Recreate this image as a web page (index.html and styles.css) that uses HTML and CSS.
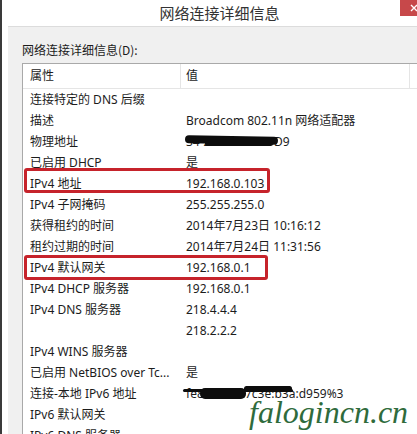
FILE: index.html
```html
<!DOCTYPE html>
<html lang="zh-CN">
<head>
<meta charset="utf-8">
<title>网络连接详细信息</title>
<link rel="stylesheet" href="styles.css">
</head>
<body>
<div class="window">
  <div class="titlebar">
    <span class="title">网络连接详细信息</span>
    <div class="close">
      <svg width="17" height="16" viewBox="0 0 17 16"><path d="M11 5 L17 11 M17 5 L11 11" stroke="#fff" stroke-width="1.4" fill="none"/></svg>
    </div>
  </div>
  <div class="client">
    <div class="label">网络连接详细信息(D):</div>
    <div class="listbox">
      <div class="header">
        <div class="hcell hc1">属性</div>
        <div class="hcell hc2">值</div>
        <div class="hcell hc3"></div>
      </div>
      <div class="rows">
        <div class="k">连接特定的 DNS 后缀</div><div class="v"></div>
        <div class="k">描述</div><div class="v">Broadcom 802.11n 网络适配器</div>
        <div class="k">物理地址</div><div class="v">34-23-87-56-57-D9</div>
        <div class="k">已启用 DHCP</div><div class="v">是</div>
        <div class="k">IPv4 地址</div><div class="v">192.168.0.103</div>
        <div class="k">IPv4 子网掩码</div><div class="v">255.255.255.0</div>
        <div class="k">获得租约的时间</div><div class="v">2014年7月23日 10:16:12</div>
        <div class="k">租约过期的时间</div><div class="v">2014年7月24日 11:31:56</div>
        <div class="k">IPv4 默认网关</div><div class="v">192.168.0.1</div>
        <div class="k">IPv4 DHCP 服务器</div><div class="v">192.168.0.1</div>
        <div class="k">IPv4 DNS 服务器</div><div class="v">218.4.4.4</div>
        <div class="k"></div><div class="v">218.2.2.2</div>
        <div class="k">IPv4 WINS 服务器</div><div class="v"></div>
        <div class="k">已启用 NetBIOS over Tc...</div><div class="v">是</div>
        <div class="k">连接-本地 IPv6 地址</div><div class="v">fe80::40f5:7c3e:b3a:d959%3</div>
        <div class="k">IPv6 默认网关</div><div class="v"></div>
        <div class="k">IPv6 DNS 服务器</div><div class="v"></div>
      </div>
    </div>
  </div>
</div>
<div class="redbox box1"></div>
<div class="redbox box2"></div>
<div class="scribble mac1"></div>
<div class="scribble mac2"></div>
<div class="scribble ip6a"></div>
<div class="scribble ip6b"></div>
<div class="scribble ip6c"></div>
<div class="watermark">falogincn.cn</div>
</body>
</html>
```
FILE: styles.css
```css
html, body {
  margin: 0;
  padding: 0;
  background: #ffffff;
  width: 417px;
  height: 434px;
  overflow: hidden;
  font-family: "Noto Sans", "Noto Sans CJK SC", sans-serif;
  font-size: 12px;
  color: #1c1c1c;
}

.window {
  border-left: 2px solid #3a3a3a;
  height: 434px;
  background: #ffffff;
  overflow: hidden;
}

.titlebar {
  height: 26px;
  display: flex;
  align-items: center;
  justify-content: center;
  padding-left: 20px;
  position: relative;
}

.title {
  font-family: "Noto Sans CJK SC", sans-serif;
  font-size: 15px;
  color: #333333;
  line-height: 20px;
}

.close {
  position: absolute;
  right: 0;
  top: 0;
  width: 17px;
  height: 16px;
  background: #c7484a;
}
.close svg { display: block; }

.client {
  margin-left: 6px;
  background: #f0f0f0;
  border-top: 1px solid #dcdcdc;
  height: 407px;
  overflow: hidden;
}

.label {
  padding: 15px 0 0 14px;
  line-height: 16px;
  height: 16px;
  font-family: "Noto Sans CJK SC", sans-serif;
  font-size: 12px;
  margin-bottom: 5px;
  white-space: nowrap;
}

.listbox {
  margin-left: 14px;
  background: #ffffff;
  border-top: 1px solid #a9a9a9;
  border-left: 1px solid #a9a9a9;
  height: 371px;
  overflow: hidden;
}

.header {
  display: flex;
  height: 24px;
  border-bottom: 1px solid #e5e5e5;
}

.hcell {
  box-sizing: border-box;
  height: 24px;
  line-height: 24px;
  border-right: 1px solid #e5e5e5;
  white-space: nowrap;
}
.hc1 { width: 158px; padding-left: 7px; }
.hc2 { width: 229px; padding-left: 5px; }
.hc3 { flex: 1; border-right: none; }

.rows {
  display: grid;
  grid-template-columns: 158px 1fr;
  grid-auto-rows: 21px;
}

.k, .v {
  line-height: 21px;
  white-space: nowrap;
}
.k { padding-left: 7px; }
.v { padding-left: 5px; }

.redbox {
  position: absolute;
  box-sizing: border-box;
  border: 3px solid #c6232b;
  border-radius: 3px;
}
.box1 { left: 24px; top: 168px; width: 246px; height: 25px; }
.box2 { left: 24px; top: 255px; width: 244px; height: 25px; }

.scribble {
  position: absolute;
  background: #0d0d0d;
  border-radius: 5px;
}
.mac1 { left: 185px; top: 136px; width: 93px; height: 8px; transform: rotate(1deg); }
.mac2 { left: 205px; top: 141px; width: 68px; height: 5px; }
.ip6a { left: 183px; top: 389px; width: 110px; height: 3px; border-radius: 2px; }
.ip6b { left: 200px; top: 388px; width: 46px; height: 11px; }
.ip6c { left: 244px; top: 386px; width: 48px; height: 5px; }

.watermark {
  position: absolute;
  left: 249px;
  top: 396px;
  font-family: "Liberation Serif", serif;
  font-style: italic;
  font-size: 32px;
  line-height: 32px;
  color: #2f6b3c;
  white-space: nowrap;
}
```
